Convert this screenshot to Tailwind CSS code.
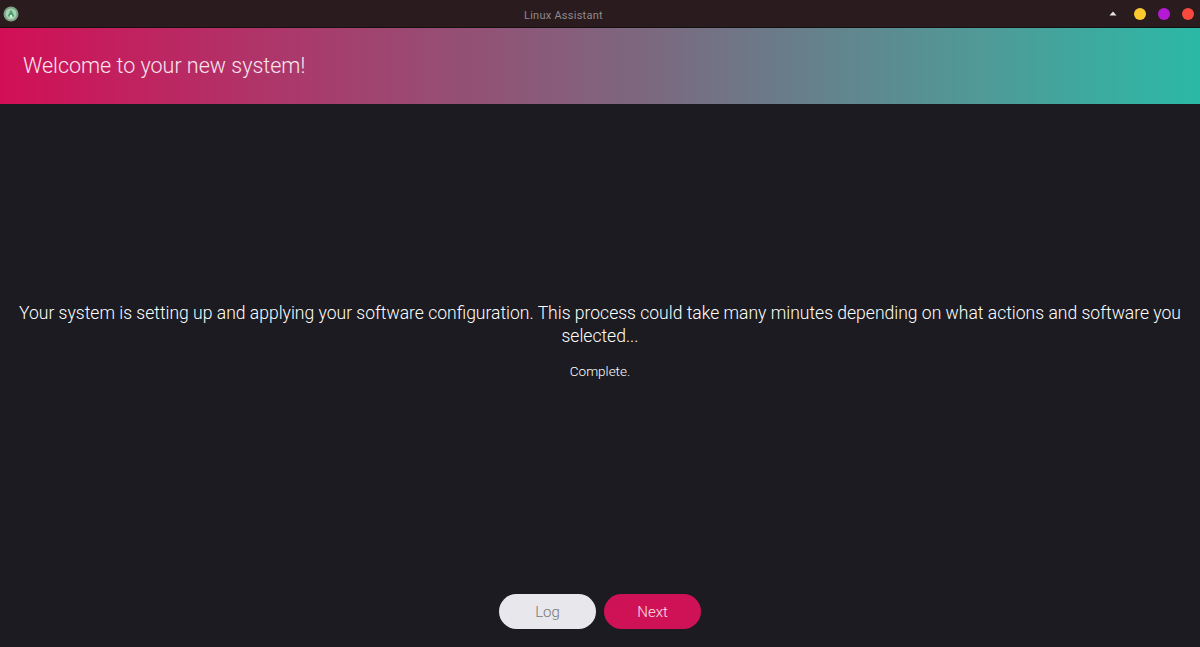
<!DOCTYPE html>
<html lang="en">
  <head>
    <meta charset="UTF-8" />
    <meta name="viewport" content="width=device-width, initial-scale=1.0" />
    <script src="https://cdn.jsdelivr.net/npm/@tailwindcss/browser@4"></script>
    <title>Linux Assistant</title>
  </head>

  <body>
    <div class="flex flex-col w-[1200px] h-[647px] overflow-hidden bg-[#1b1b21] font-['Roboto',sans-serif] text-white">
      <!-- Title bar -->
      <div class="relative flex items-center justify-between h-[28px] shrink-0 pl-[3px] pr-[6px] bg-[#2a1b1f] border-b border-[#15100f]">
        <svg width="16" height="16" viewBox="0 0 16 16">
          <circle cx="8" cy="8" r="7.5" fill="#7f9f84" />
          <circle cx="8" cy="8" r="5.5" fill="#a5d6b2" />
          <path d="M8 3.5 L11.5 10.5 H4.5 Z" fill="#4f9c72" />
          <rect x="7" y="9" width="2" height="2.5" fill="#e6f2e8" />
        </svg>
        <span class="absolute left-[524px] top-[9px] text-[11px] leading-[14px] tracking-[0.25px] text-[#8f8a8c]">Linux Assistant</span>
        <div class="flex items-center">
          <svg width="8" height="5" viewBox="0 0 8 5" class="mr-[17px]"><path d="M4 0.5 L7.5 4.5 H0.5 Z" fill="#e8e4e2" /></svg>
          <span class="w-[12px] h-[12px] mr-[12px] rounded-full bg-[#fdc92e]"></span>
          <span class="w-[12px] h-[12px] mr-[12px] rounded-full bg-[#b41ad6]"></span>
          <span class="w-[12px] h-[12px] rounded-full bg-[#f9483e]"></span>
        </div>
      </div>

      <!-- Header -->
      <div class="flex items-center h-[76px] shrink-0 pl-[23px] bg-[linear-gradient(to_right,#d20f56_0%,#a53f6e_28%,#7a6a80_55%,#4f9a98_82%,#2bb9a6_100%)]">
        <h1 class="text-[21.5px] font-light text-[#f8e6ef]">Welcome to your new system!</h1>
      </div>

      <!-- Content -->
      <div class="flex flex-col items-center flex-1 pt-[198px]">
        <p class="w-[1180px] text-center text-[17.55px] leading-[23px] font-light text-white">Your system is setting up and applying your software configuration. This process could take many minutes depending on what actions and software you selected...</p>
        <p class="mt-[14px] text-[13.5px] leading-[18px] font-light">Complete.</p>
      </div>

      <!-- Buttons -->
      <div class="flex justify-center gap-[8px] h-[53px] shrink-0">
        <button class="w-[97px] h-[35px] pt-[1px] rounded-full bg-[#e8e8ec] text-[15px] font-light text-[#77777d]">Log</button>
        <button class="w-[97px] h-[35px] pt-[1px] rounded-full bg-[#cf1155] text-[15px] font-light text-[#fbe3ec]">Next</button>
      </div>
    </div>
  </body>
</html>
